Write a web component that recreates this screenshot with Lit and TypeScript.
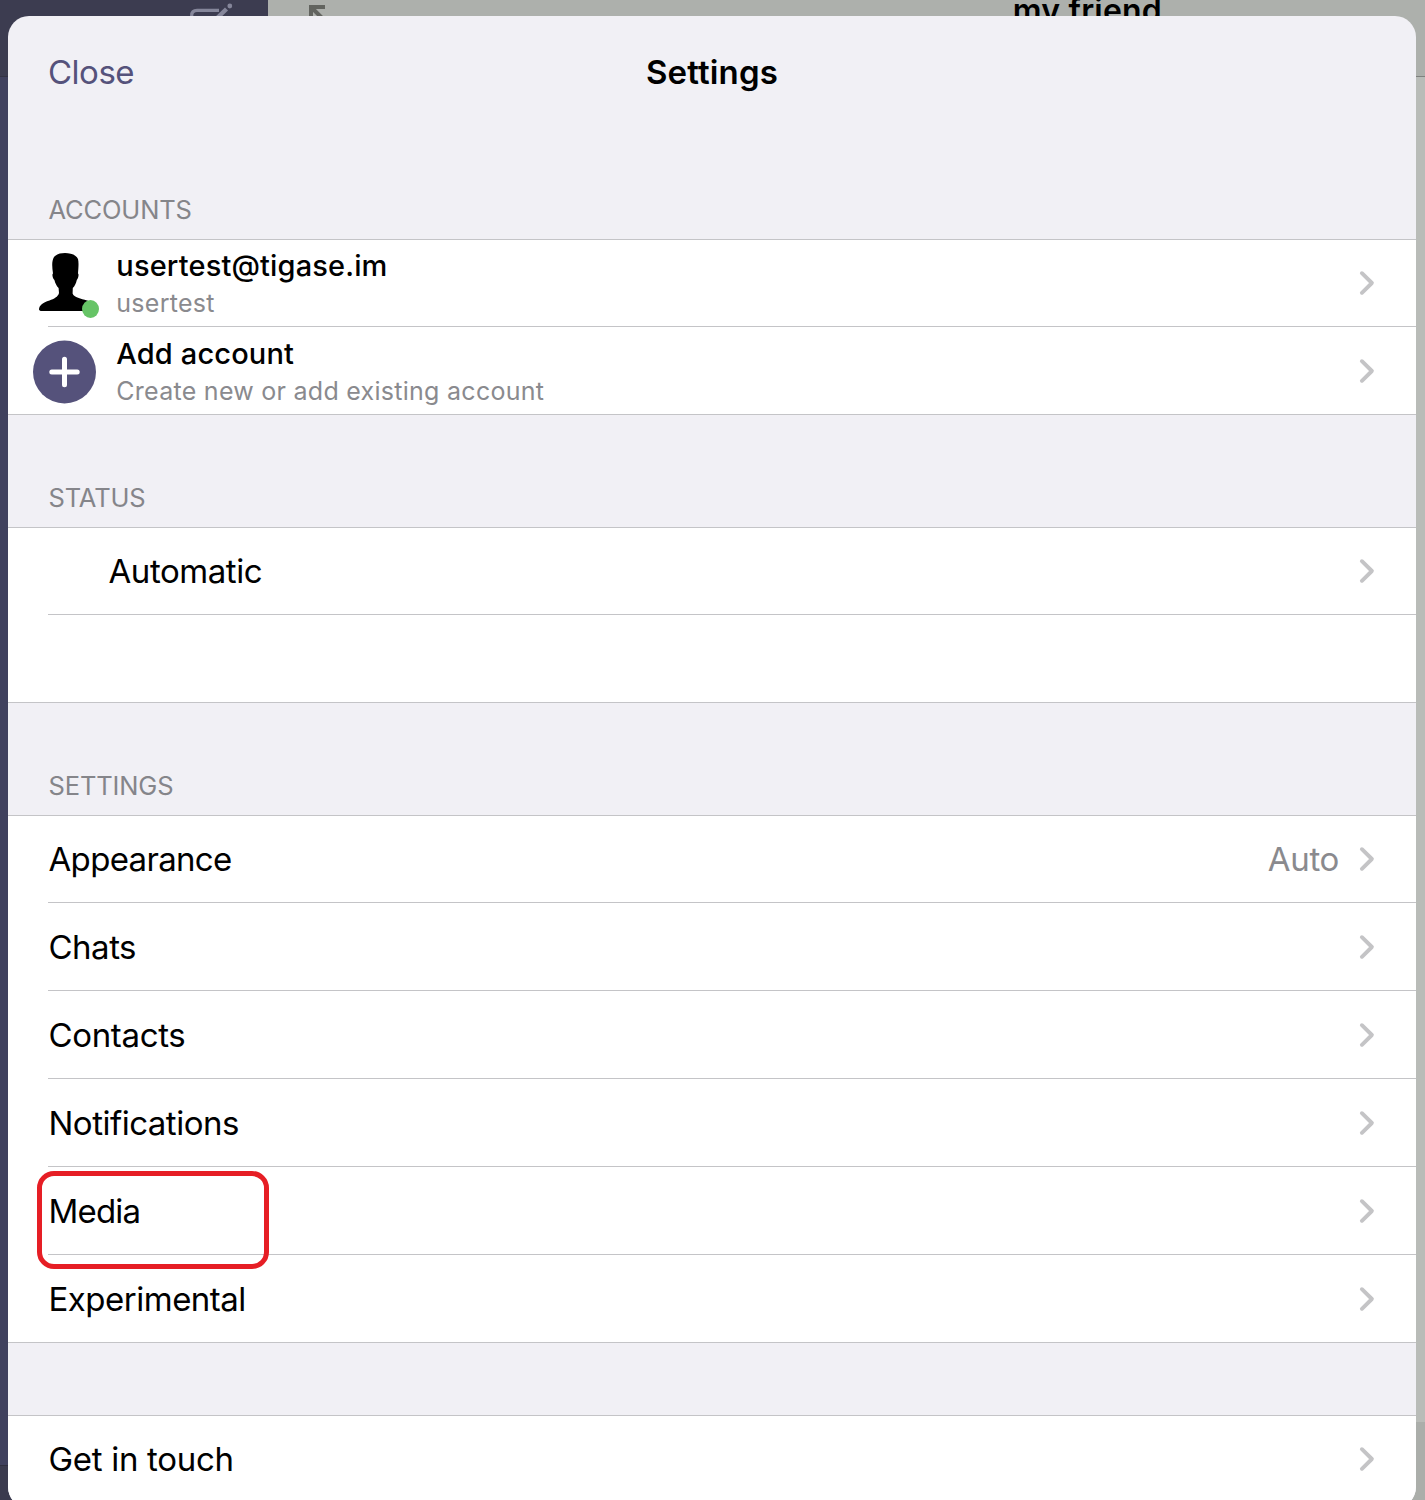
import { LitElement, html, css, svg, nothing } from "lit";
import { customElement, property } from "lit/decorators.js";
import { classMap } from "lit/directives/class-map.js";
import { styleMap } from "lit/directives/style-map.js";

const chevron = html`<svg class="chevron" width="18" height="28" viewBox="0 0 18 28">
  <path d="M3.9 4.2 L13.9 14 L3.9 23.8" fill="none" stroke="#c4c4c6" stroke-width="3.9" stroke-linecap="round" stroke-linejoin="round" />
</svg>`;

@customElement("settings-row")
export class SettingsRow extends LitElement {
  @property() label = "";
  @property() value = "";
  @property({ type: Number }) tracking = -0.35;
  @property({ type: Boolean }) first = false;
  @property({ type: Boolean }) last = false;
  @property({ type: Boolean }) indent = false;
  @property({ type: Boolean }) empty = false;
  @property({ type: Boolean }) marked = false;

  static styles = css`
    :host { display: block; position: relative; }
    .row {
      box-sizing: border-box; height: 88px; display: flex; flex-direction: column;
      background: #fff; color: #000;
    }
    .first { border-top: 1px solid #c4c4c7; }
    .body {
      flex: 1; display: flex; align-items: center; justify-content: space-between;
      padding: 1px 40px 0 40.5px; font-size: 33px; line-height: 40px; letter-spacing: -0.35px;
      white-space: nowrap;
    }
    .first .body { padding-top: 0; padding-bottom: 1px; }
    .first .chevron { margin-top: 0; }
    .indent { padding-left: 100.5px; }
    .line { flex: none; height: 1px; margin-left: 40px; background: #c4c4c7; }
    .full { margin-left: 0; }
    .end { display: flex; align-items: center; color: #8a8a8e; gap: 19px; }
    .chevron { display: block; margin-top: -1px; }
    .mark {
      position: absolute; z-index: 2; left: 29px; top: 4px; width: 232px; height: 98px;
      box-sizing: border-box; border: 5px solid #e61e25; border-radius: 17px;
    }
  `;

  render() {
    return html`
      <div class=${classMap({ row: true, first: this.first })}>
        <div class=${classMap({ body: true, indent: this.indent })}>
          ${this.empty ? nothing : html`
            <span style=${styleMap({ letterSpacing: `${this.tracking}px` })}>${this.label}</span>
            <span class="end">${this.value ? html`<span>${this.value}</span>` : nothing}${chevron}</span>`}
        </div>
        <div class=${classMap({ line: true, full: this.last })}></div>
      </div>
      ${this.marked ? html`<div class="mark"></div>` : nothing}
    `;
  }
}

@customElement("account-row")
export class AccountRow extends LitElement {
  @property() name = "";
  @property() detail = "";
  @property() kind: "user" | "add" = "user";

  static styles = css`
    :host { display: block; }
    .row { box-sizing: border-box; height: 88px; display: flex; flex-direction: column; background: #fff; }
    .first { border-top: 1px solid #c4c4c7; }
    .body { flex: 1; min-height: 0; display: flex; align-items: center; padding: 0 40px 0 24px; }
    .icon { display: block; flex: none; }
    .text { flex: 1; display: flex; flex-direction: column; padding: 5px 0 0 12.3px; white-space: nowrap; }
    .first .text { padding-top: 4px; }
    .name { font-size: 29px; line-height: 36px; font-weight: 500; color: #000; letter-spacing: 0.15px; }
    .detail { font-size: 25px; line-height: 39px; color: #8a8a8e; letter-spacing: 0.27px; }
    .chevron { display: block; flex: none; }
    .line { flex: none; height: 1px; margin-left: 40px; background: #c4c4c7; }
    .full { margin-left: 0; }
  `;

  private icon() {
    return this.kind === "user"
      ? svg`
        <path fill="#000" d="M33 13 C38 13 44 14.5 46 19 C47 23 46.3 29 46 33.5 C47.2 34 46.2 38.5 44.8 40 C44 43.5 42.8 46 40.8 48 L40.6 53.5 C42 57.5 49 58.8 55 60.4 C62 62.6 66 65.3 66 69.2 Q66 71 63 71 L10 71 Q7 71 7 69.2 C7.3 65.3 10.5 62.6 17.5 60.4 C22 58.8 26 57 27 53 L26.6 48 C24.6 46 23.3 43.5 22.4 40 C20.6 38.5 19.8 34 21 33.5 C20 27 19.6 21 22 17 C25 13.8 29 13 33 13 Z" />
        <ellipse cx="58.5" cy="69" rx="8.5" ry="9" fill="#66c466" />`
      : svg`
        <circle cx="32.5" cy="44" r="31.5" fill="#55527b" />
        <path d="M32.5 31.3 V56.7 M19.8 44 H45.2" stroke="#fff" stroke-width="5" stroke-linecap="round" />`;
  }

  render() {
    const user = this.kind === "user";
    return html`
      <div class=${classMap({ row: true, first: user })}>
        <div class="body">
          <svg class="icon" width="72" height="86" viewBox="0 0 72 86">${this.icon()}</svg>
          <div class="text">
            <span class="name">${this.name}</span>
            <span class="detail">${this.detail}</span>
          </div>
          ${chevron}
        </div>
        <div class=${classMap({ line: true, full: !user })}></div>
      </div>
    `;
  }
}

@customElement("app-root")
export class AppRoot extends LitElement {
  static styles = css`
    :host { display: block; font-family: Inter, "Liberation Sans", sans-serif; }
    .page { position: relative; width: 1425px; height: 1500px; overflow: hidden; display: grid; grid-template-rows: 1500px; }
    .page > * { grid-area: 1 / 1; }
    .backdrop { display: flex; height: 1500px; }
    .side { width: 268px; display: flex; flex-direction: column; background: #40415e; }
    .side-top { height: 76px; background: #3c3c50; border-bottom: 1px solid #333344; display: flex; justify-content: flex-end; }
    .side-mid { flex: 1; }
    .side-foot { height: 34px; background: #3b3b4e; border-top: 1px solid #303040; }
    .compose { display: block; margin-right: 32px; }
    .main { flex: 1; display: flex; flex-direction: column; background: #b9bcb8; }
    .main-top {
      box-sizing: border-box; height: 77px; background: #adb0ac; border-bottom: 1px solid #7f817f;
      display: flex; justify-content: space-between; padding: 0 263px 0 36px;
    }
    .friend { font-size: 32px; line-height: 38px; margin-top: -8px; font-weight: 600; color: #000; letter-spacing: 0.2px; }
    .main-mid { flex: 1; }
    .main-foot { height: 78px; background: #abaeaa; }
    .sheet {
      margin: 16px 9px 0 8px; height: 1492px; border-radius: 21px; overflow: hidden; background: #f1f0f5;
      display: flex; flex-direction: column;
    }
    .bar {
      height: 111px; display: grid; grid-template-columns: 1fr auto 1fr; align-items: start;
      box-sizing: border-box; padding: 36px 40px 0; font-size: 33px; line-height: 40px;
    }
    .close { color: #55527b; letter-spacing: -0.5px; }
    .title { font-weight: 600; color: #000; letter-spacing: 0.15px; }
    .heading {
      height: 112px; box-sizing: border-box; padding: 67px 40.5px 0; color: #85858a;
      font-size: 25.5px; line-height: 32px; letter-spacing: -0.15px;
    }
    .gap { height: 72px; flex: none; }
  `;

  render() {
    return html`
      <div class="page">
        <div class="backdrop">
          <div class="side">
            <div class="side-top">
              <svg class="compose" width="50" height="30" viewBox="186 0 50 30">
                <path d="M219 10.3 H197 Q191.7 10.3 191.7 15.5 V30" fill="none" stroke="#85869a" stroke-width="3.2" />
                <path d="M214 21 L226.5 9" stroke="#85869a" stroke-width="4.4" />
                <circle cx="229.8" cy="6" r="2.4" fill="#85869a" />
              </svg>
            </div>
            <div class="side-mid"></div>
            <div class="side-foot"></div>
          </div>
          <div class="main">
            <div class="main-top">
              <svg width="30" height="30" viewBox="304 0 30 30">
                <path d="M325 7 H311 V24 M311 7 L328 24" fill="none" stroke="#62645f" stroke-width="4" />
              </svg>
              <span class="friend">my friend</span>
            </div>
            <div class="main-mid"></div>
            <div class="main-foot"></div>
          </div>
        </div>
        <div class="sheet">
          <div class="bar"><span class="close">Close</span><span class="title">Settings</span></div>
          <div class="heading">ACCOUNTS</div>
          <account-row kind="user" name="usertest@tigase.im" detail="usertest"></account-row>
          <account-row kind="add" name="Add account" detail="Create new or add existing account"></account-row>
          <div class="heading">STATUS</div>
          <settings-row first indent label="Automatic" tracking="-0.45"></settings-row>
          <settings-row empty last></settings-row>
          <div class="heading">SETTINGS</div>
          <settings-row first label="Appearance" value="Auto" tracking="-0.67"></settings-row>
          <settings-row label="Chats" tracking="-0.5"></settings-row>
          <settings-row label="Contacts"></settings-row>
          <settings-row label="Notifications" tracking="-0.5"></settings-row>
          <settings-row label="Media" marked tracking="-0.8"></settings-row>
          <settings-row label="Experimental" last tracking="-0.5"></settings-row>
          <div class="gap"></div>
          <settings-row first label="Get in touch" tracking="-0.3"></settings-row>
        </div>
      </div>
    `;
  }
}
